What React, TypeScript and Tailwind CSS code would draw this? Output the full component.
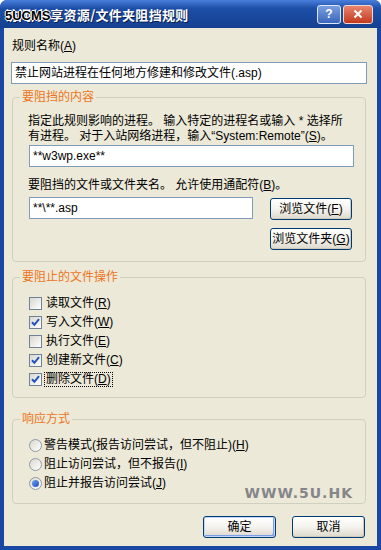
import type { ReactNode } from 'react'

function CheckBox({ checked }: { checked?: boolean }) {
  return (
    <span className="w-[13px] h-[13px] shrink-0 border border-[#6f8296] bg-gradient-to-br from-[#d8d7cf] to-white flex items-center justify-center">
      {checked && (
        <svg width="9" height="9" viewBox="0 0 9 9">
          <path d="M1 4.2 L3.4 6.8 L8 1.2" stroke="#2150c2" strokeWidth="2" fill="none" />
        </svg>
      )}
    </span>
  )
}

function Radio({ checked }: { checked?: boolean }) {
  return (
    <span className="w-[13px] h-[13px] shrink-0 rounded-full border border-[#8e9aa6] bg-gradient-to-br from-[#d9d8d0] to-white flex items-center justify-center">
      {checked && <span className="w-[7px] h-[7px] rounded-full bg-gradient-to-br from-[#6e9ef0] to-[#1f4fbd]" />}
    </span>
  )
}

function XpButton({ children, primary, className = '' }: { children: ReactNode; primary?: boolean; className?: string }) {
  return (
    <button
      className={`h-[22px] rounded-[3px] border border-[#003c74] bg-gradient-to-b from-white via-[#f4f3ee] to-[#dcd8cb] text-[12px] leading-none text-black flex items-center justify-center ${
        primary ? 'shadow-[inset_0_0_0_1px_#c2d5fa,inset_-2px_-2px_0_0_#7d9cea]' : 'shadow-[inset_-1px_-1px_0_0_#cfcabb]'
      } ${className}`}
    >
      {children}
    </button>
  )
}

function Group({ title, children, className = '' }: { title: string; children: ReactNode; className?: string }) {
  return (
    <fieldset className={`mx-[1px] border border-[#d0d0bf] rounded-[4px] ${className}`}>
      <legend className="-ml-[8px] px-[2px] text-[12px] leading-[14px] text-[#ec7522]">{title}</legend>
      {children}
    </fieldset>
  )
}

export default function App() {
  return (
    <div className="w-[381px] h-[550px] flex flex-col bg-[#1a47a3] rounded-t-[7px] overflow-hidden font-['Liberation_Sans','Noto_Sans_CJK_SC',sans-serif] text-[12px] text-black">
      {/* Title bar */}
      <div className="relative h-[28px] shrink-0 flex items-center justify-between pl-[5px] pr-[8px] bg-gradient-to-b from-[#4a7fdc] via-[#1d4fa8] via-30% to-[#15408f]">
        <span className="text-[13px] font-bold text-white leading-none tracking-[0.3px] [text-shadow:1px_1px_0_#0a1e4a] font-['Noto_Sans_CJK_SC',sans-serif]">
          访问/共享资源/文件夹阻挡规则
        </span>
        <span className="absolute left-[5px] top-[9px] text-[13px] font-bold leading-none text-black font-['Liberation_Sans',sans-serif] [text-shadow:-1px_0_0_#fff,1px_0_0_#fff,0_-1px_0_#fff,0_1px_0_#fff]">
          5UCMS
        </span>
        <div className="flex items-center gap-[2px]">
          <div className="w-[24px] h-[19px] rounded-[3px] border border-[#dfe8f7] bg-gradient-to-b from-[#7b9fdd] to-[#3a66bd] flex items-center justify-center text-white font-bold text-[12px] leading-none">
            ?
          </div>
          <div className="w-[30px] h-[19px] rounded-[3px] border border-[#f2d8d2] bg-gradient-to-b from-[#e8846c] to-[#c2371c] flex items-center justify-center">
            <svg width="10" height="10" viewBox="0 0 10 10">
              <path d="M1.5 1.5 L8.5 8.5 M8.5 1.5 L1.5 8.5" stroke="#fff" strokeWidth="2" />
            </svg>
          </div>
        </div>
      </div>

      {/* Body */}
      <div className="flex-1 mx-[4px] mb-[4px] bg-[#ece9d8] flex flex-col pt-[11px] pl-[7px] pr-[10px] pb-[8px]">
        <div className="leading-[14px] pl-[1px]">
          规则名称(<u>A</u>)
        </div>
        <div className="mt-[9px] h-[22px] border border-[#7f9db9] bg-white flex items-center px-[3px]">
          禁止网站进程在任何地方修建和修改文件(.asp)
        </div>

        <Group title="要阻挡的内容" className="mt-[6px] pl-[15px] pr-[11px] pt-[10px] pb-[11px]">
          <div className="leading-[15px]">
            <div>指定此规则影响的进程。 输入特定的进程名或输入 * 选择所</div>
            <div>
              有进程。 对于入站网络进程，输入“System:Remote”(<u>S</u>)。
            </div>
          </div>
          <div className="mt-[1px] ml-[1px] h-[22px] border border-[#7f9db9] bg-white flex items-center px-[3px]">
            **w3wp.exe**
          </div>
          <div className="mt-[11px] leading-[15px]">
            要阻挡的文件或文件夹名。 允许使用通配符(<u>B</u>)。
          </div>
          <div className="mt-[4px] ml-[1px] flex gap-[17px]">
            <div className="w-[224px] h-[22px] border border-[#7f9db9] bg-white flex items-center px-[3px]">
              **\**.asp
            </div>
            <div className="flex flex-col gap-[8px] mt-[1px]">
              <XpButton className="w-[82px]">
                浏览文件(<u>F</u>)
              </XpButton>
              <XpButton className="w-[82px]">
                浏览文件夹(<u>G</u>)
              </XpButton>
            </div>
          </div>
        </Group>

        <Group title="要阻止的文件操作" className="mt-[8px] pl-[15px] pt-[10px] pb-[8px]">
          {[
            { label: '读取文件', key: 'R', checked: false },
            { label: '写入文件', key: 'W', checked: true },
            { label: '执行文件', key: 'E', checked: false },
            { label: '创建新文件', key: 'C', checked: true },
            { label: '删除文件', key: 'D', checked: true, focus: true },
          ].map((item) => (
            <div key={item.key} className="h-[19px] flex items-center gap-[3px] pl-[1px]">
              <CheckBox checked={item.checked} />
              <span className={`leading-[13px] px-[1px] ${item.focus ? 'outline outline-1 outline-dotted outline-black' : ''}`}>
                {item.label}(<u>{item.key}</u>)
              </span>
            </div>
          ))}
        </Group>

        <Group title="响应方式" className="mt-[14px] pl-[15px] pr-[12px] pt-[10px] pb-[2px]">
          {[
            { label: '警告模式(报告访问尝试，但不阻止)', key: 'H', checked: false },
            { label: '阻止访问尝试，但不报告', key: 'I', checked: false },
            { label: '阻止并报告访问尝试', key: 'J', checked: true },
          ].map((item) => (
            <div key={item.key} className="h-[19px] flex items-center gap-[2px] pl-[1px]">
              <Radio checked={item.checked} />
              <span className="leading-[13px]">
                {item.label}(<u>{item.key}</u>)
              </span>
            </div>
          ))}
          <div className="-mt-[8px] h-[16px] flex justify-end">
            <span className="text-[14px] font-bold leading-[16px] tracking-[1px] text-[#85858a] font-['DejaVu_Sans',sans-serif]">
              WWW.5U.HK
            </span>
          </div>
        </Group>

        <div className="mt-[12px] flex justify-end gap-[16px] pr-[2px]">
          <XpButton primary className="w-[73px]">
            确定
          </XpButton>
          <XpButton className="w-[73px]">取消</XpButton>
        </div>
      </div>
    </div>
  )
}
